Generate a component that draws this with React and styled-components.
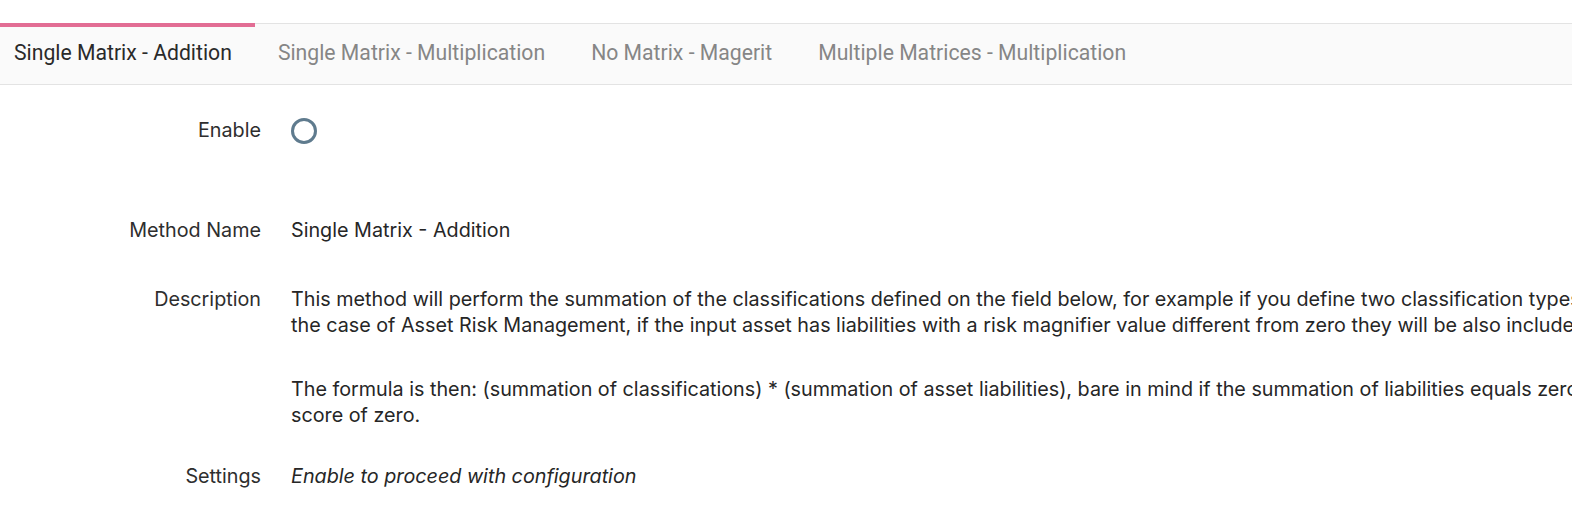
import React from 'react';
import styled, { createGlobalStyle } from 'styled-components';

const tabs = [
  'Single Matrix - Addition',
  'Single Matrix - Multiplication',
  'No Matrix - Magerit',
  'Multiple Matrices - Multiplication',
];

const description = [
  'This method will perform the summation of the classifications defined on the field below, for example if you define two classification types, in\nthe case of Asset Risk Management, if the input asset has liabilities with a risk magnifier value different from zero they will be also included.',
  'The formula is then: (summation of classifications) * (summation of asset liabilities), bare in mind if the summation of liabilities equals zero, it will result in a\nscore of zero.',
];

const App = () => {
  const [active, setActive] = React.useState(0);
  const [enabled, setEnabled] = React.useState(false);

  return (
    <Page>
      <GlobalStyle />
      <TabBar>
        {tabs.map((title, idx) => (
          <Tab key={title} active={idx === active} onClick={() => setActive(idx)}>
            {title}
          </Tab>
        ))}
      </TabBar>
      <Form>
        <Row gap={73}>
          <Label>Enable</Label>
          <Value>
            <Radio checked={enabled} onClick={() => setEnabled(!enabled)} />
          </Value>
        </Row>
        <Row gap={43}>
          <Label>Method Name</Label>
          <Value>Single Matrix - Addition</Value>
        </Row>
        <Row gap={35}>
          <Label>Description</Label>
          <Value>
            {description.map((text, idx) => (
              <Paragraph key={idx}>{text}</Paragraph>
            ))}
          </Value>
        </Row>
        <Row gap={0}>
          <Label>Settings</Label>
          <Value>
            <Hint>Enable to proceed with configuration</Hint>
          </Value>
        </Row>
      </Form>
    </Page>
  );
};

const GlobalStyle = createGlobalStyle`
  body {
    margin: 0;
    background: #ffffff;
    overflow: hidden;
  }
`;

const Page = styled.div`
  width: 1572px;
  padding-top: 23px;
  font-family: Inter, 'Noto Sans', sans-serif;
  color: #2e2e2e;
`;

const TabBar = styled.div`
  display: flex;
  height: 60px;
  background: #fafafa;
  border-top: 1px solid #e3e3e3;
  border-bottom: 1px solid #e3e3e3;
`;

const Tab = styled.div`
  display: flex;
  align-items: center;
  padding: 0 23px 7px;
  margin-top: -1px;
  border-top: 4px solid ${({ active }) => (active ? '#e26d94' : 'transparent')};
  font-family: Roboto, 'Liberation Sans', sans-serif;
  font-size: 21.2px;
  color: ${({ active }) => (active ? '#2a2a2a' : '#868686')};
  cursor: pointer;
  white-space: nowrap;

  &:first-child {
    padding-left: 14px;
  }
`;

const Form = styled.div`
  padding-top: 32px;
`;

const Row = styled.div`
  display: grid;
  grid-template-columns: 261px 1fr;
  column-gap: 30px;
  margin-bottom: ${({ gap }) => gap}px;
  font-size: 19.75px;
  line-height: 26px;
`;

const Label = styled.div`
  text-align: right;
  color: #2e2e2e;
`;

const Value = styled.div`
  min-width: 0;
  color: #262626;
  white-space: nowrap;
`;

const Paragraph = styled.p`
  margin: 0 0 38px;
  white-space: pre;

  &:last-child {
    margin-bottom: 0;
  }
`;

const Radio = styled.div`
  width: 26px;
  height: 26px;
  box-sizing: border-box;
  margin-top: 1px;
  border-radius: 50%;
  border: 3px solid ${({ checked }) => (checked ? '#e26d94' : '#5f7b8e')};
  background: ${({ checked }) => (checked ? '#e26d94' : 'transparent')};
  cursor: pointer;
`;

const Hint = styled.span`
  font-style: italic;
`;

export default App;
